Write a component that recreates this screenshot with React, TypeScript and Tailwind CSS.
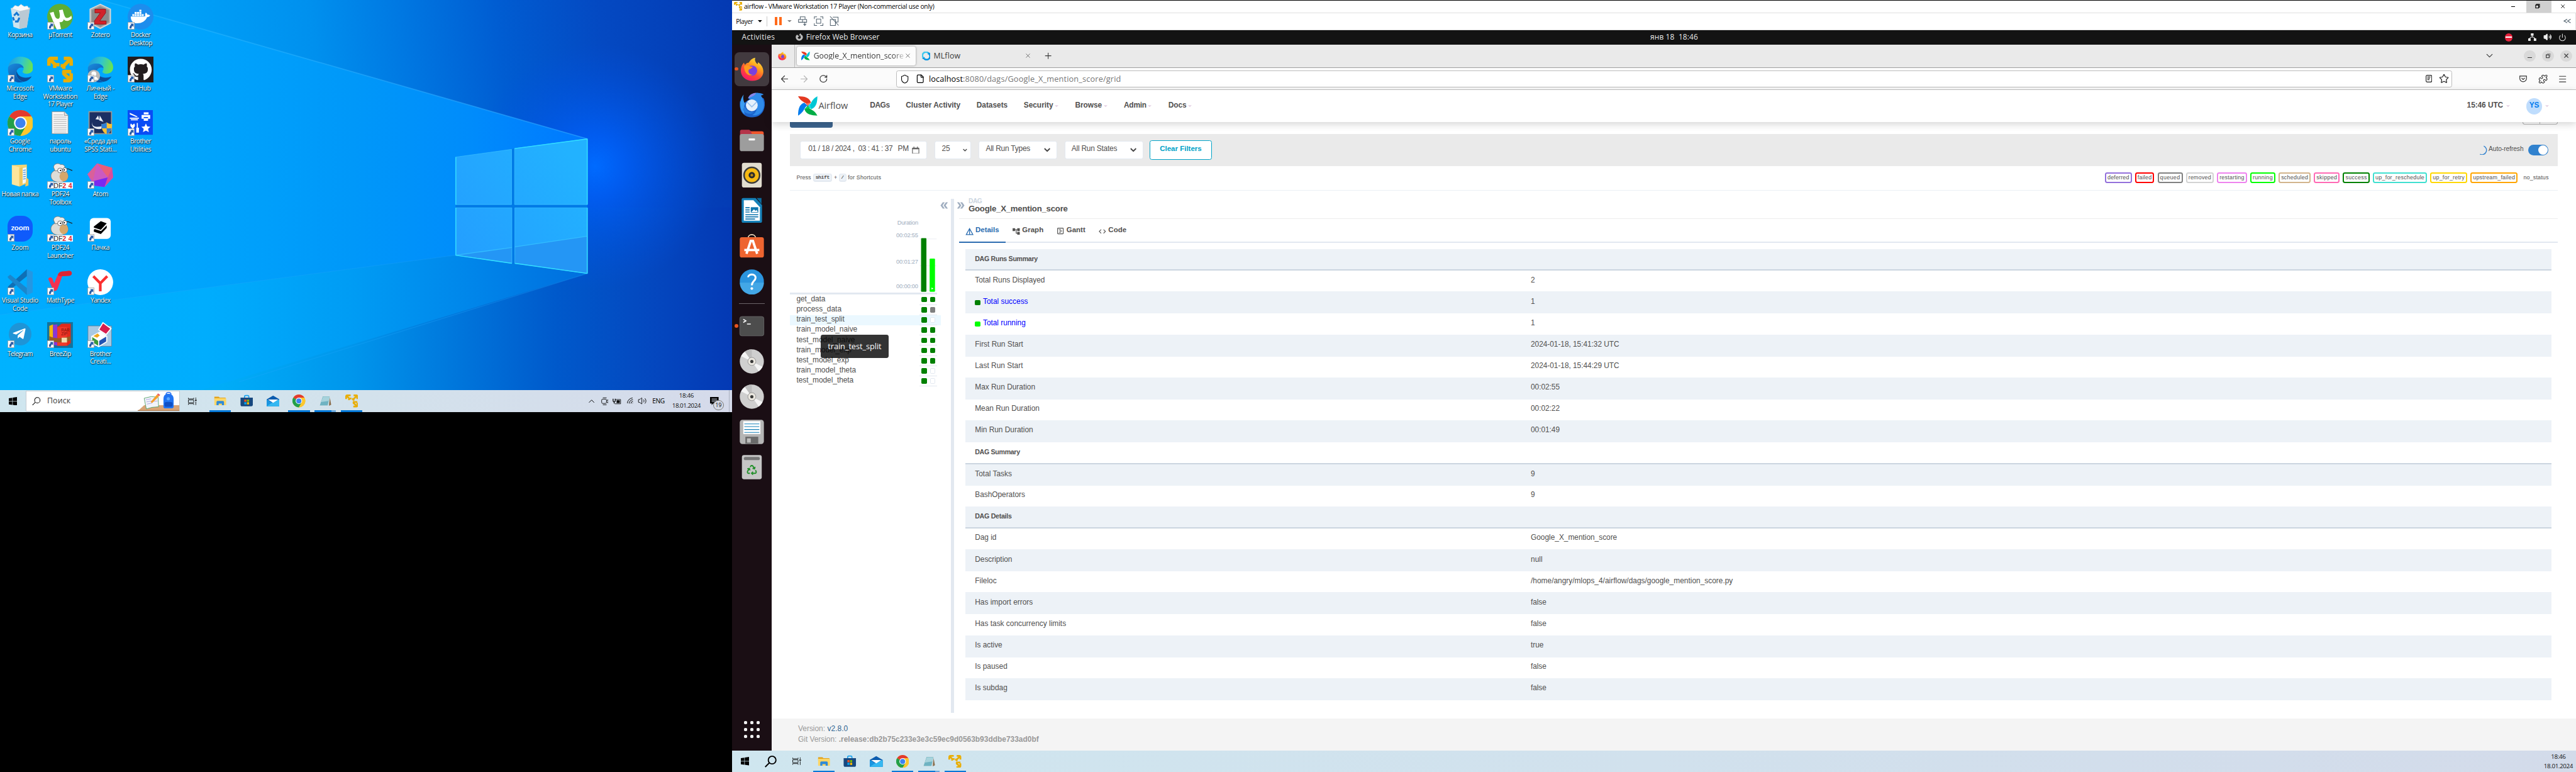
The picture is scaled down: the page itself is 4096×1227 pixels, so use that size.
import React, { useLayoutEffect, useRef, useState } from "react";
import {
  ArrowLeft, ArrowRight, RotateCw, Shield, File, Star, X, Plus, Menu, ChevronDown, ChevronUp, Power, Volume2, Wifi, Puzzle,
} from "lucide-react";
import { FaDocker, FaGithub, FaTelegramPlane, FaRecycle, FaFirefoxBrowser } from "react-icons/fa";
import { MdDetails, MdAccountTree, MdCode, MdDoubleArrow } from "react-icons/md";

/** Single-line text whose tracking is adjusted so that it fills a given width. */
function Fit({ w, className = "", children }: { w: number; className?: string; children: string }) {
  const outer = useRef<HTMLSpanElement>(null);
  const inner = useRef<HTMLSpanElement>(null);
  const [tracking, setTracking] = useState(0);
  useLayoutEffect(() => {
    if (!outer.current || !inner.current) return;
    const ratio = inner.current.getBoundingClientRect().width / outer.current.getBoundingClientRect().width;
    setTracking((w - w * ratio) / children.length);
  }, [w, children]);
  return (
    <span ref={outer} className={`inline-block shrink-0 whitespace-pre ${className}`} style={{ width: w }}>
      <span ref={inner} className="inline-block" style={{ letterSpacing: tracking }}>{children}</span>
    </span>
  );
}

type IconProps = { className?: string };

/* ---------- application icons ---------- */

const VmwareIcon = ({ className = "size-12" }: IconProps) => (
  <svg viewBox="0 0 48 48" className={className} fill="none" stroke="#e9ae07" strokeWidth="6.5" strokeLinejoin="round">
    <path d="M3.2 17V7a4 4 0 0 1 4-3.8H20M5 5l10 10h8M14 13v8" />
    <path d="M31 3.2h10a4 4 0 0 1 3.8 4V17M43 5L31 17h-6M31 15v8" />
    <path d="M44.8 31v10a4 4 0 0 1-4 3.8H30M43 43L31 32v-4h14" />
  </svg>
);

const ChromeIcon = ({ className = "size-12" }: IconProps) => (
  <svg viewBox="0 0 48 48" className={className}>
    <circle cx="24" cy="24" r="24" fill="#fcc72e" />
    <path d="M24 24L3.2 12A24 24 0 0 1 44.8 12H24z" fill="#e33b2e" />
    <path d="M3.2 12A24 24 0 0 0 24 48L34.4 30 24 24z" fill="#23a04a" />
    <path d="M44.8 12H24v12l10.4 6L24 48A24 24 0 0 0 44.8 12z" fill="#fcc72e" />
    <circle cx="24" cy="24" r="12" fill="#fff" />
    <circle cx="24" cy="24" r="9.5" fill="#3c83f1" />
  </svg>
);

const EdgeIcon = ({ person = false }: { person?: boolean }) => (
  <svg viewBox="0 0 48 48" className="size-12">
    <defs>
      <linearGradient id="edgeTop" x1="0" y1="0.3" x2="1" y2="0.5">
        <stop offset="0" stopColor="#1e9be0" />
        <stop offset="0.5" stopColor="#2fc5cf" />
        <stop offset="1" stopColor="#6be44e" />
      </linearGradient>
      <linearGradient id="edgeLow" x1="0" y1="0" x2="0.6" y2="1">
        <stop offset="0" stopColor="#1b8de0" />
        <stop offset="1" stopColor="#0b55a8" />
      </linearGradient>
    </defs>
    <path d="M1 20C3 8 12 0 24 0c14 0 24 9 24 20 0 8-6 12-13 12-5 0-7-2-7-4 0-1.500 2-2 2-6 0-6-6-9-12-9C11 13 4 16 1 20z" fill="url(#edgeTop)" />
    <path d="M1 20c3-5 9-7 16-7 7 0 12 4 13 8-8-3-14 3-14 11 0 7 6 14 14 15-16 5-31-8-29-27z" fill="url(#edgeLow)" />
    <path d="M17 27c-3 8 3 18 13 20 7-1 12-5 15-10-12 5-25 2-28-10z" fill="#0f4d96" />
    {person && (
      <g>
        <circle cx="12" cy="36" r="11.500" fill="#b9b9b9" />
        <circle cx="12" cy="32" r="4.500" fill="#fff" />
        <path d="M4 43c1-8 15-8 16 0z" fill="#fff" />
      </g>
    )}
  </svg>
);

const BinIcon = () => (
  <svg viewBox="0 0 48 48" className="size-12">
    <path d="M6 8L42 7 36 44 22 47 11 43z" fill="#dfe8ee" opacity="0.92" />
    <path d="M22 12l20-5-6 37-14 3z" fill="#b9c9d4" />
    <path d="M8 9l6-6 6 2 5-4 6 4 6-1 4 6-18 4z" fill="#f7f9fa" stroke="#b8c3cb" strokeWidth="0.7" />
    <path d="M12 22l5-5 4 5M22 26l-3 7h-5M12 31l-2-6" fill="none" stroke="#1778d2" strokeWidth="3.6" />
  </svg>
);

const UtorrentIcon = () => (
  <svg viewBox="0 0 48 48" className="size-12">
    <circle cx="24" cy="24" r="24" fill="#5fae34" />
    <path d="M5 17l7-2c2 7 3 12 7 13 5 1 6-5 3-16l7-1c2 7 3 13 6 15 3 1 7 0 10-4l1 5c-4 5-11 7-15 2-1 4-4 6-8 5 1 5 2 9 3 13l-8 1C13 38 9 27 5 17z" fill="#fff" />
  </svg>
);

const ZoteroIcon = () => (
  <svg viewBox="0 0 48 48" className="size-12">
    <path d="M24 1l19 9v26L24 46 5 36V10z" fill="#a9a9a9" stroke="#d8d8d8" strokeWidth="2" />
    <path d="M24 5l16 7v22l-16 9L8 34V12z" fill="#8b8b8b" />
    <path d="M14 10h20v7L23 32h12v6H13v-6l11-15H14z" fill="#d2232a" stroke="#8d1418" strokeWidth="1" />
  </svg>
);

const DockerTile = () => (
  <div className="flex size-12 items-center justify-center rounded-full bg-[#1d8ded]">
    <FaDocker className="size-[36px] text-white" />
  </div>
);

const GithubTile = () => (
  <div className="flex size-12 items-center justify-center bg-[#221d1f]">
    <FaGithub className="size-[42px] text-white" />
  </div>
);

const TextFileIcon = () => (
  <svg viewBox="0 0 48 48" className="size-12">
    <path d="M9 3h23l7 7v34H9z" fill="#f6f6f6" stroke="#8c8c8c" />
    <path d="M32 3v7h7" fill="#ddd" stroke="#8c8c8c" />
    <path d="M12 9h18M12 13h24M12 17h24M12 21h24M12 25h24M12 29h24M12 33h24M12 37h24M12 41h24" stroke="#a5a5a5" />
  </svg>
);

const SpssIcon = () => (
  <svg viewBox="0 0 48 48" className="size-12">
    <rect x="3" y="3" width="42" height="41" fill="#1b2f63" stroke="#9a9a9a" strokeWidth="2" />
    <path d="M9 21c-2 9 6 12 18 9l-1 5C15 37 6 31 9 21zM15 17l5-7 2 8zM22 19l1-9 7 12z" fill="#e9eef7" />
    <path d="M26 26c4 0 8-1 10-3 2 2 6 3 10 3 0 9-3 16-10 19-7-3-10-10-10-19z" fill="#f7c034" />
    <path d="M36 23c-2 2-6 3-10 3 0 3 .4 6 1.300 8H36zM36 34h8.700c-1.500 5-4.200 9-8.700 11z" fill="#2d7fd6" />
  </svg>
);

const BrotherUtilIcon = () => (
  <svg viewBox="0 0 48 48" className="size-12">
    <rect y="0" width="47" height="46" fill="#0a4cf5" />
    <g fill="#fff">
      <path d="M4 5l15 7-3 1L4 8zM4 14h17v2H4zM6 17h13v2H6z" />
      <path d="M30 4h9v4h-9zM26 9h16v7h-4v-3h-8v3h-4zM30 15h8v5h-8z" />
      <path d="M6 25l3 3 3-3c3 3 1 7-1 8v8H8v-8c-3-2-4-5-2-8zM17 24h2v9h2v9h-5v-9h1z" />
      <path d="M34 25l2.500 5.500 6 .5-4.500 4 1.500 6-5.500-3-5.500 3 1.500-6-4.500-4 6-.5z" />
    </g>
  </svg>
);

const FolderDocIcon = () => (
  <svg viewBox="0 0 48 48" className="size-12">
    <path d="M8 4l28-1v35l-14 6z" fill="#f5d574" />
    <path d="M8 4l14 4v36L8 40z" fill="#fde59b" />
    <path d="M28 10l7-2v28l-7 3z" fill="#f3f6f9" />
    <path d="M29 14l5-1M29 18l5-1M29 22l5-1M29 26l5-1M29 30l5-1" stroke="#4a90d9" strokeWidth="1.400" />
    <path d="M22 10l6-2v33l-6 3zM35 28l4 2v12l-6 2z" fill="#f0c75e" />
  </svg>
);

const Pdf24Icon = () => (
  <svg viewBox="0 0 48 48" className="size-12">
    <path d="M7 24c0-6 6-11 14-12 9-2 17 3 18 12 0 8-7 12-16 12-10 0-16-5-16-12z" fill="#dcdcd8" stroke="#777" />
    <path d="M12 8c0-6 8-9 13-5 5-1 8 2 8 5l-6 5-12 2z" fill="#ececea" stroke="#777" />
    <ellipse cx="31" cy="25" rx="8" ry="9" fill="#d5a76a" />
    <circle cx="24" cy="14" r="4.500" fill="#fff" stroke="#555" />
    <circle cx="33" cy="13" r="4" fill="#fff" stroke="#555" />
    <circle cx="25" cy="14" r="1.300" /><circle cx="32" cy="13" r="1.300" />
    <path d="M37 11c4-1 7 3 10 3" stroke="#222" strokeWidth="1.500" fill="none" />
    <rect y="36" width="48" height="12" fill="#fff" />
    <text x="12" y="46.500" fontFamily="Liberation Sans" fontSize="12.500" fill="#222">DF</text>
    <text x="28.500" y="46.500" fontFamily="Liberation Sans" fontWeight="bold" fontSize="12.500" textLength="18" fill="#e3242b">24</text>
  </svg>
);

const AtomGemIcon = () => (
  <svg viewBox="0 0 48 48" className="size-12">
    <path d="M18 1L46 9 48 27 32 45 11 42 0 21z" fill="#b455d8" />
    <path d="M18 1L46 9 38 27 10 34 0 21z" fill="#d9609a" />
    <path d="M18 1l28 8-8 18z" fill="#ea5f78" />
    <path d="M18 1l20 26-28 7z" fill="#cc5ac0" />
    <path d="M10 34l28-7-6 18-21-3z" fill="#7a28f0" />
    <path d="M38 27l8-18 2 18-16 18z" fill="#d84c9c" />
  </svg>
);

const ZoomTile = () => (
  <div className="flex size-12 items-center justify-center rounded-[19px] bg-[#0f5bfb] pb-1">
    <Fit w={34} className="font-['Lato'] text-[14px] leading-none font-bold text-white">zoom</Fit>
  </div>
);

const PachkaIcon = () => (
  <svg viewBox="0 0 48 48" className="size-12">
    <rect x="4.500" y="4" width="39" height="39" rx="7" fill="#fff" />
    <path d="M12 20l13-10 11 4-11 12-13-4zM12 26l1.500-1.500 12 4L36 18v4.500L25 34l-13-4.500z" fill="#000" />
  </svg>
);

const VscodeIcon = () => (
  <svg viewBox="0 0 48 48" className="size-12">
    <path d="M36 0l12 5v38l-12 5z" fill="#2497e3" />
    <path d="M36 0L2 31l-2 3 5 4L36 13z" fill="#0f6fb5" />
    <path d="M36 48L2 17l-2-3 5-4 31 25z" fill="#1b86cc" />
  </svg>
);

const MathTypeIcon = () => (
  <svg viewBox="0 0 48 48" className="size-12">
    <path d="M2 18c2-4 6-4 8 0l3 8 7-16c2-5 6-6 10-6l11-1c6 0 7 8 1 9l-14 1-8 22c-2 7-8 7-10 1z" fill="#f4324f" />
    <path d="M20 10c2-5 6-6 10-6l11-1c6 0 7 8 1 9l-14 1c-4 0-7 0-8-3z" fill="#dd2433" />
  </svg>
);

const YandexIcon = () => (
  <svg viewBox="0 0 48 48" className="size-12">
    <circle cx="24" cy="24" r="24" fill="#fff" />
    <path d="M11 13l13 13 13-13M24 26v15" fill="none" stroke="#fb2f2f" strokeWidth="5" />
  </svg>
);

const TelegramTile = () => (
  <div className="flex size-12 items-center justify-center pb-1">
    <div className="flex size-[43px] items-center justify-center rounded-full bg-[#1f94d6] pr-1">
      <FaTelegramPlane className="size-[27px] text-white" />
    </div>
  </div>
);

const BreeZipIcon = () => (
  <svg viewBox="0 0 48 48" className="size-12">
    <rect width="48" height="48" fill="#14729c" />
    <path d="M4 7l7-3v38l-7-3z" fill="#f5b50f" /><path d="M11 5l8-1v40l-8-2z" fill="#8b35d6" />
    <path d="M19 9l8-6h17v36l-6 5H19z" fill="#e02a1c" /><path d="M19 9h18v35H19z" fill="#f0392a" />
    <path d="M4 26c12 6 26 4 40 0v8c-14 5-28 5-40 0z" fill="#9a5a22" />
    <path d="M27 29h10v9H27z" fill="#f0dcae" />
    <text x="26" y="18" fontFamily="Liberation Sans" fontSize="7.500" fill="#7a0f08">RAR</text>
    <text x="26" y="25" fontFamily="Liberation Sans" fontSize="7.500" fill="#7a0f08">ZIP</text>
  </svg>
);

const BrotherCreativeIcon = () => (
  <svg viewBox="0 0 48 48" className="size-12">
    <path d="M1 7h44v38H1z" fill="#a9c9e3" stroke="#5e7d99" />
    <path d="M7 26l17-9 13 9v11l-16 10-14-9z" fill="#fff" />
    <path d="M9 28l11 7v9L9 37z" fill="#3a9a3d" /><path d="M22 35l13-8v9l-13 8z" fill="#2153b3" />
    <path d="M11 26l8-5 4 4-5 4z" fill="#f2a81d" />
    <path d="M29 1l15 11-9 11-14-9z" fill="#d81e4f" stroke="#fff" strokeWidth="2" />
  </svg>
);

const FolderIcon = () => (
  <svg viewBox="0 0 24 24" className="size-6">
    <path d="M1 4h8l2 2h11v4H1z" fill="#e3a21a" /><path d="M1 7h22v13H1z" fill="#fbd667" />
    <path d="M5 20v-6a2 2 0 0 1 2-2h10a2 2 0 0 1 2 2v6h-4v-3H9v3z" fill="#2f8ad8" />
  </svg>
);
const StoreIcon = () => (
  <svg viewBox="0 0 24 24" className="size-6">
    <path d="M8 7V4a2 2 0 0 1 2-2h4a2 2 0 0 1 2 2v3" fill="none" stroke="#1ca4ee" strokeWidth="2" />
    <path d="M.5 6h23v13a3 3 0 0 1-3 3h-17a3 3 0 0 1-3-3z" fill="#17487f" />
    <path d="M7.500 9.500h4v4h-4z" fill="#f25022" /><path d="M12.500 9.500h4v4h-4z" fill="#7fba00" />
    <path d="M7.500 14.500h4v4h-4z" fill="#00a4ef" /><path d="M12.500 14.500h4v4h-4z" fill="#ffb900" />
  </svg>
);
const MailIcon = () => (
  <svg viewBox="0 0 24 24" className="size-6">
    <path d="M0 9l12-7 12 7v13H0z" fill="#0b5cae" /><path d="M0 9l12 7 12-7v13H0z" fill="#1b95e0" />
    <path d="M0 22l12-8 12-5v13z" fill="#35b8f1" />
    <path d="M2.500 9.500h19L12 15.500z" fill="#fff" />
  </svg>
);
const NotepadIcon = () => (
  <svg viewBox="0 0 24 24" className="size-6">
    <path d="M20 3l3 16-4 2z" fill="#8a6d4b" />
    <path d="M7 3h14l-4 18H1z" fill="#6fb3c2" stroke="#dfe9ec" /><path d="M8 4h12l-2 8-14 2z" fill="#a7d3dc" />
  </svg>
);

const WinLogo = () => (
  <svg viewBox="0 0 16 16" className="size-4"><path d="M0 2.300L6.500 1.400v6.200H0zM7.300 1.300L16 0v7.600H7.300zM0 8.400h6.500v6.200L0 13.700zM7.300 8.400H16V16l-8.700-1.300z" fill="#000" /></svg>
);
const Magnifier = ({ className = "size-4", sw = 1.2 }: IconProps & { sw?: number }) => (
  <svg viewBox="0 0 16 16" className={className} fill="none" stroke="#000" strokeWidth={sw}><circle cx="10" cy="6" r="5.200" /><path d="M6.200 9.800L.6 15.400" /></svg>
);
const TaskViewIcon = () => (
  <svg viewBox="0 0 17 16" className="h-4 w-[17px]" fill="none" stroke="#000"><path d="M.6 1.500v2h10v-2M.6 14.500v-2h10v2M.6 5.500h10v5H.6zM14.500 1v3M14.500 8v7" /><path d="M13 5h3v2h-3z" fill="#000" stroke="none" /></svg>
);

const FirefoxIcon = ({ className = "size-4" }: IconProps) => (
  <svg viewBox="0 0 42 44" className={className}>
    <defs>
      <linearGradient id="ffBody" x1="0.85" y1="0" x2="0.25" y2="1">
        <stop offset="0" stopColor="#fff04d" /><stop offset="0.35" stopColor="#ffa51e" />
        <stop offset="0.65" stopColor="#ff4b35" /><stop offset="1" stopColor="#f5146e" />
      </linearGradient>
    </defs>
    <path d="M27 1c-2 5 1 9 4 12 1-2 1-3 1-4 7 5 10 11 10 18 0 10-9 17-21 17S0 36 0 25c0-7 3-12 6-15 0 2 1 3 2 4 2-3 5-4 7-4 2-4 6-8 12-9z" fill="url(#ffBody)" />
    <circle cx="21" cy="25" r="9.500" fill="#7a3fe0" />
    <path d="M6 17c4-3 9-2 11 0l5 1c-2 4-6 4-7 5-3 6 3 11 9 9-9 5-18-2-18-15z" fill="#ff9a1f" />
  </svg>
);

const AirflowLogo = ({ className = "size-9" }: IconProps) => {
  const blade = "M0 0C11 0 21 2 24 11.500L18.300 18C17 11 7 13 0 0z";
  return (
    <svg viewBox="0 0 36 36" className={className}>
      <path d={blade} fill="#e43921" />
      <path d={blade} fill="#00c7d4" transform="rotate(90 18 18)" />
      <path d={blade} fill="#00ad46" transform="rotate(180 18 18)" />
      <path d={blade} fill="#017cee" transform="rotate(270 18 18)" />
      <path d="M24 11.500L18.300 18 14 14z" fill="#ff7557" />
      <path d="M24.500 24L18.300 18 22 14z" fill="#11e1ee" />
      <path d="M12 24.500L18.300 18l4 4z" fill="#04d659" />
      <circle cx="18.200" cy="18" r="1" fill="#51504f" />
    </svg>
  );
};

/* ---------- left monitor ---------- */

type Shortcut = { icon: React.ReactNode; lines: [string, number][]; link?: boolean };

const desktopColumns: Shortcut[][] = [
  [
    { icon: <BinIcon />, lines: [["Корзина", 46]], link: false },
    { icon: <EdgeIcon />, lines: [["Microsoft", 51], ["Edge", 26]] },
    { icon: <ChromeIcon />, lines: [["Google", 38], ["Chrome", 43]] },
    { icon: <FolderDocIcon />, lines: [["Новая папка", 69]], link: false },
    { icon: <ZoomTile />, lines: [["Zoom", 32]] },
    { icon: <VscodeIcon />, lines: [["Visual Studio", 68], ["Code", 28]] },
    { icon: <TelegramTile />, lines: [["Telegram", 47]] },
  ],
  [
    { icon: <UtorrentIcon />, lines: [["µTorrent", 44]] },
    { icon: <VmwareIcon />, lines: [["VMware", 43], ["Workstation", 64], ["17 Player", 47]] },
    { icon: <TextFileIcon />, lines: [["пароль", 40], ["ubuntu", 39]], link: false },
    { icon: <Pdf24Icon />, lines: [["PDF24", 33], ["Toolbox", 41]] },
    { icon: <Pdf24Icon />, lines: [["PDF24", 33], ["Launcher", 49]] },
    { icon: <MathTypeIcon />, lines: [["MathType", 52]] },
    { icon: <BreeZipIcon />, lines: [["BreeZip", 40]] },
  ],
  [
    { icon: <ZoteroIcon />, lines: [["Zotero", 35]] },
    { icon: <EdgeIcon person />, lines: [["Личный -", 52], ["Edge", 26]] },
    { icon: <SpssIcon />, lines: [["«Среда для", 61], ["SPSS Stati...", 60]] },
    { icon: <AtomGemIcon />, lines: [["Atom", 29]] },
    { icon: <PachkaIcon />, lines: [["Пачка", 34]] },
    { icon: <YandexIcon />, lines: [["Yandex", 37]] },
    { icon: <BrotherCreativeIcon />, lines: [["Brother", 40], ["Creati...", 39]] },
  ],
  [
    { icon: <DockerTile />, lines: [["Docker", 37], ["Desktop", 43]] },
    { icon: <GithubTile />, lines: [["GitHub", 38]] },
    { icon: <BrotherUtilIcon />, lines: [["Brother", 39], ["Utilities", 39]] },
  ],
];

function DesktopShortcut({ icon, lines, link = true }: Shortcut) {
  return (
    <div className="flex h-[99px] w-[75px] flex-col items-center pt-[7px]">
      <div className="relative size-12">
        {icon}
        {link && (
          <svg viewBox="0 0 13 14" className="absolute bottom-0 left-0 h-[14px] w-[13px]">
            <path d="M.5.5h12v13H.5z" fill="#fff" stroke="#9a9a9a" />
            <path d="M5 3h6v6L9 7.200C7.500 8.500 7 10 7.200 12H3.500C3 9 4 6.500 6.700 4.800z" fill="#2c5fa8" />
          </svg>
        )}
      </div>
      <div className="mt-[3px] flex flex-col items-center font-['Open_Sans','Noto_Sans',sans-serif] text-[12px] leading-[15px] text-white [text-shadow:0_1px_2px_#000a,1px_1px_1px_#000a]">
        {lines.map(([t, w]) => <Fit key={t} w={w}>{t}</Fit>)}
      </div>
    </div>
  );
}

function Wallpaper() {
  return (
    <svg viewBox="0 0 1366 768" className="absolute inset-0 h-[768px] w-[1366px]" preserveAspectRatio="none">
      <defs>
        <linearGradient id="sky" x1="0" y1="140" x2="1366" y2="0" gradientUnits="userSpaceOnUse">
          <stop offset="0" stopColor="#00a8fb" /><stop offset="0.25" stopColor="#00a1f8" />
          <stop offset="0.43" stopColor="#0090ee" /><stop offset="0.55" stopColor="#0078e2" />
          <stop offset="0.68" stopColor="#005dd2" /><stop offset="0.82" stopColor="#0449c2" /><stop offset="1" stopColor="#0439b2" />
        </linearGradient>
        <linearGradient id="cone" x1="0" x2="1096" y1="0" y2="0" gradientUnits="userSpaceOnUse">
          <stop offset="0" stopColor="#00acff" /><stop offset="0.3" stopColor="#00a6fd" />
          <stop offset="0.6" stopColor="#0098f9" /><stop offset="0.8" stopColor="#008cfb" /><stop offset="1" stopColor="#0078ff" />
        </linearGradient>
        <linearGradient id="floor" x1="0" x2="1096" y1="0" y2="0" gradientUnits="userSpaceOnUse">
          <stop offset="0" stopColor="#00b2ff" /><stop offset="0.35" stopColor="#00adfd" />
          <stop offset="0.6" stopColor="#009cf4" /><stop offset="0.8" stopColor="#0086ea" /><stop offset="1" stopColor="#006ede" />
        </linearGradient>
        <linearGradient id="below" x1="0" x2="1366" y1="0" y2="0" gradientUnits="userSpaceOnUse">
          <stop offset="0" stopColor="#00b2fe" /><stop offset="0.3" stopColor="#00adf8" />
          <stop offset="0.48" stopColor="#0096ec" /><stop offset="0.62" stopColor="#0077dc" />
          <stop offset="0.76" stopColor="#0059cb" /><stop offset="0.9" stopColor="#0446be" /><stop offset="1" stopColor="#0439b4" />
        </linearGradient>
        <radialGradient id="glow" cx="1110" cy="310" r="230" gradientUnits="userSpaceOnUse">
          <stop offset="0" stopColor="#006bff" /><stop offset="0.25" stopColor="#0060fa" stopOpacity="0.8" /><stop offset="1" stopColor="#0050e0" stopOpacity="0" />
        </radialGradient>
        <linearGradient id="pane" x1="0" y1="1" x2="1" y2="0.3">
          <stop offset="0" stopColor="#249dff" /><stop offset="1" stopColor="#22b2ff" />
        </linearGradient>
        <linearGradient id="ray" x1="188" x2="1096" y1="0" y2="0" gradientUnits="userSpaceOnUse">
          <stop offset="0" stopColor="#35c0ff" stopOpacity="0.35" /><stop offset="1" stopColor="#2aa2ff" stopOpacity="0.7" />
        </linearGradient>
      </defs>
      <rect width="1366" height="768" fill="url(#sky)" />
      <path d="M0 587L850 476 1096 387H1366V768H0z" fill="url(#below)" />
      <rect x="850" width="516" height="768" fill="url(#glow)" />
      <path d="M0 0H188L1096 259V476H850L0 587z" fill="url(#cone)" />
      <path d="M0 587L850 476 1096 510 240 768H0z" fill="url(#floor)" />
      <path d="M188 0L1096 259" stroke="url(#ray)" strokeWidth="2" />
      <path d="M0 587L850 476M1096 510L446 712" stroke="#22a8ff" strokeOpacity="0.3" strokeWidth="1.500" />
      <path d="M850 381.500h246v6H850zM954.500 278l5.500-1v214h-5.500z" fill="#0079e6" />
      <g fill="url(#pane)">
        <path d="M850 293l104.500-14.500v103H850zM960 277l136-18v122.500H960zM850 387.500h105V491l-105-15zM960.500 387.500H1096V510l-135.500-19z" />
      </g>
      <path d="M850 476l105-14.500V491zM960.500 460.500L1096 440.500V510l-135.500-19z" fill="#2496f5" />
      <path d="M850 476l105-14.500M960.500 460.500L1096 440.500" stroke="#33bcff" strokeWidth="1.500" />
      <g fill="none" stroke="#40c4ff" strokeOpacity="0.75">
        <path d="M850 293l104.500-14.500v103H850zM960 277l136-18v122.500H960zM850 387.500h105V491l-105-15zM960.500 387.500H1096V510l-135.500-19z" />
      </g>
      <path d="M850.500 293v88.500M850.500 387.500V476M1095.500 259v122.500M1095.500 387.500V510M960 277l136-18M960.500 491L1096 510M850 476l105 15" stroke="#33e0ff" strokeWidth="1.600" fill="none" />
    </svg>
  );
}

function TaskApps() {
  const apps: { icon: React.ReactNode; state: "open" | "stack" | "idle" }[] = [
    { icon: <FolderIcon />, state: "open" },
    { icon: <StoreIcon />, state: "idle" },
    { icon: <MailIcon />, state: "idle" },
    { icon: <ChromeIcon className="size-6" />, state: "open" },
    { icon: <NotepadIcon />, state: "stack" },
    { icon: <VmwareIcon className="size-6" />, state: "open" },
  ];
  return (
    <div className="flex h-10">
      {apps.map(({ icon, state }, i) => (
        <div key={i} className="mr-px flex h-10 w-12 flex-col items-center justify-between pt-[8px]">
          {icon}
          <div className="flex h-[2.4px] w-10">
            {state !== "idle" && <div className="h-full flex-1 bg-[#0078d7]" />}
            {state === "stack" && <div className="h-full w-2 bg-[#6aa9de]" />}
          </div>
        </div>
      ))}
    </div>
  );
}

const winFont = "font-['Open_Sans','Noto_Sans',sans-serif]";

function LeftTaskbar() {
  return (
    <div className="relative flex h-10 items-center bg-linear-to-r from-[#cfe6ef] via-[#d3e2ec] to-[#d5daea]">
      <div className="flex w-12 justify-center"><WinLogo /></div>
      <div className="flex h-[39px] w-[288px] items-center overflow-hidden border border-[#c4ccd2] bg-white pl-[11px]">
        <Magnifier />
        <Fit w={44} className={`ml-3 text-[14.5px] leading-none text-[#3c3c3c] ${winFont}`}>Поиск</Fit>
        <svg viewBox="0 0 78 38" className="ml-[125px] h-[38px] w-[78px] shrink-0">
          <path d="M12 27h66v11H0z" fill="#d9a577" /><path d="M0 36h78v2H0z" fill="#b88457" />
          <path d="M12 14l13-3 13 1 1 18-12 1-11 3z" fill="#f2f4fa" stroke="#4b9b63" />
          <path d="M15 17l10-2M16 21l10-2M17 25l10-2M29 16l7-1M29 20l8-1" stroke="#a49be0" />
          <path d="M24 21L36 7l4 3-13 13z" fill="#f7a02c" /><path d="M36 7l2-2 4 3-2 2z" fill="#ee5b62" />
          <path d="M53 7c0-5 9-5 9 0" fill="none" stroke="#2b73f0" strokeWidth="2" />
          <path d="M48 16c0-8 4-10 9-10s10 2 10 10v14c0 2-2 3-4 3H52c-3 0-4-1-4-3z" fill="#2074f2" />
          <rect x="50" y="21" width="15" height="9" rx="3" fill="#0f4fc4" /><circle cx="57" cy="15" r="3" fill="#58a8ff" />
        </svg>
      </div>
      <div className="ml-[15px]"><TaskViewIcon /></div>
      <div className="ml-[19px]"><TaskApps /></div>
      <div className="flex-1" />
      <ChevronUp className="size-[18px] text-black" strokeWidth={1.5} />
      <svg viewBox="0 0 14 16" className="ml-[9px] h-4 w-[14px]" fill="none" stroke="#000"><path d="M3 1.500h7M3 14.500h7" /><rect x=".8" y="4" width="9" height="8" rx="2" /><path d="M10 7l3-2v6l-3-2" /></svg>
      <svg viewBox="0 0 17 14" className="ml-[8px] h-[14px] w-[17px]"><path d="M1 2v4a2 2 0 0 0 4 0V2M3 8v3" stroke="#000" strokeWidth="1.500" fill="none" /><path d="M6 3.500h9v8H4" fill="none" stroke="#000" /><path d="M7.500 5h6v5h-6z" /></svg>
      <Wifi className="ml-[9px] size-[16px] -rotate-45 text-black" strokeWidth={1.6} />
      <Volume2 className="ml-[5px] size-[17px] text-black" strokeWidth={1.5} />
      <Fit w={23} className={`ml-[10px] text-[12px] leading-none text-black ${winFont}`}>ENG</Fit>
      <div className={`ml-[14px] flex flex-col items-center text-[11.5px] leading-[19px] text-[#111] ${winFont}`}>
        <Fit w={27}>18:46</Fit>
        <Fit w={53}>18.01.2024</Fit>
      </div>
      <div className="relative ml-[18px] h-10 w-[26px]">
        <svg viewBox="0 0 16 16" className="mt-[12px] size-4"><path d="M0 0h16v12H6l-3 3v-3H0z" fill="#000" /><path d="M3 3.500h10M3 6h10M3 8.500h7" stroke="#d5daea" /></svg>
        <div className="absolute top-[18px] left-[6px] flex size-[19px] items-center justify-center rounded-full border border-[#777] bg-[#d6dbe6]">
          <span className={`text-[10px] leading-none text-black ${winFont}`}>19</span>
        </div>
      </div>
      <div className="ml-[9px] h-10 w-[6px] border-l border-[#a9b0bf]" />
    </div>
  );
}

function LeftMonitor() {
  return (
    <div className="flex h-[1440px] w-[1366px] shrink-0 flex-col bg-black">
      <div className="relative h-[768px] overflow-hidden">
        <Wallpaper />
        <div className="relative flex h-[728px]">
          {desktopColumns.map((col, i) => (
            <div key={i} className="flex flex-col">
              {col.map((s, j) => <DesktopShortcut key={j} {...s} />)}
            </div>
          ))}
        </div>
        <LeftTaskbar />
      </div>
    </div>
  );
}

/* ---------- VMware chrome and GNOME shell ---------- */

function VmwareChrome() {
  return (
    <div className={`flex flex-col bg-white text-[12px] leading-none text-black ${winFont}`}>
      <div className="h-px bg-black" />
      <div className="flex h-[22px] items-center pl-[3px]">
        <VmwareIcon className="size-4" />
        <Fit w={355} className="ml-[3px]">airflow - VMware Workstation 17 Player (Non-commercial use only)</Fit>
        <div className="flex-1" />
        <div className="h-px w-[7px] bg-black" />
        <div className="ml-[21px] flex h-[22px] w-[47px] items-center justify-center bg-[#d0d0d0]">
          <svg viewBox="0 0 9 9" className="mr-[4px] size-[9px]"><path d="M1 2.500h5.500V8H1zM2.500 2V.8h5.700v5.700H7" fill="none" stroke="#000" strokeWidth="1.300" /></svg>
        </div>
        <X className="mr-[18px] ml-[16px] size-[12px]" strokeWidth={2} />
      </div>
      <div className="h-px bg-[#dfdfdf]" />
      <div className="flex h-[31px] items-center border-r border-[#dfdfdf] pl-[7px]">
        <Fit w={32}>Player</Fit>
        <svg viewBox="0 0 8 4" className="mt-px ml-[9px] h-1 w-2"><path d="M0 0h8L4 4z" /></svg>
        <div className="ml-[8px] h-[19px] w-px bg-[#c9c9c9]" />
        <div className="ml-[15px] flex gap-[4px]">
          <div className="h-4 w-[4px] bg-[#ff6a1a]" />
          <div className="h-4 w-[4px] bg-[#ff6a1a]" />
        </div>
        <svg viewBox="0 0 8 4" className="ml-[11px] h-1 w-2"><path d="M0 0h8L4 4z" fill="#888" /></svg>
        <svg viewBox="0 0 18 18" className="ml-[12px] size-[18px]" fill="none" stroke="#51616e" strokeWidth="1.200"><path d="M4 1h9v5H4zM.8 6h7.500v5H.8zM8.300 6H16v5H8.300zM12.500 10v6M10 14l2.500 3 2.500-3" /></svg>
        <svg viewBox="0 0 18 18" className="ml-[11px] size-[18px]" fill="none" stroke="#51616e" strokeWidth="1.200"><path d="M1 5V1h5M12 1h5v4M17 13v4h-5M6 17H1v-4M5 5h8v8H5z" /></svg>
        <svg viewBox="0 0 18 18" className="ml-[12px] size-[18px]" fill="none" stroke="#51616e" strokeWidth="1.200"><path d="M6 1.500h10v9h-5M1.500 6H11v11H1.500zM1 0l16 17" /></svg>
        <div className="flex-1" />
        <svg viewBox="0 0 14 8" className="mr-[8px] h-2 w-[14px]" fill="none" stroke="#51616e" strokeWidth="1.300"><path d="M7 .6L1.200 4 7 7.400M13.500.6L7.700 4l5.800 3.400" /></svg>
      </div>
      <div className="ml-[60px] h-px bg-[#dfdfdf]" />
    </div>
  );
}

const ubuntu = "font-['Open_Sans','Noto_Sans',sans-serif]";

function GnomeBar() {
  return (
    <div className={`flex h-[27px] items-center bg-[#131313] text-[14px] leading-none text-[#e8e8e8] ${ubuntu}`}>
      <Fit w={62} className="ml-[18px]">Activities</Fit>
      <FaFirefoxBrowser className="ml-[38px] size-[14px] text-[#bdbdbd]" />
      <Fit w={137} className="ml-[6px]">Firefox Web Browser</Fit>
      <Fit w={89} className="ml-[1438px]">янв 18  18:46</Fit>
      <div className="flex-1" />
      <div className="flex size-[15px] items-center justify-center rounded-full bg-[#e6223c]"><div className="h-[2px] w-[11px] bg-white" /></div>
      <svg viewBox="0 0 15 14" className="ml-[29px] h-[14px] w-[15px]" fill="#f0f0f0"><path d="M5 0h5v4.500H5zM0 9.500h4.500V14H0zM10.500 9.500H15V14h-4.500z" /><path d="M7.500 4v3M2 10l3-3h5l3 3" fill="none" stroke="#f0f0f0" strokeWidth="1.200" /></svg>
      <Volume2 className="ml-[13px] size-[16px]" strokeWidth={2} fill="#f0f0f0" />
      <Power className="mr-[18px] ml-[12px] size-[15px]" strokeWidth={1.9} />
    </div>
  );
}

function Disc() {
  return (
    <svg viewBox="0 0 48 48" className="size-12">
      <circle cx="24" cy="24" r="22.500" fill="#cfcfcf" />
      <path d="M24 24L4 14A22.500 22.500 0 0 1 11 5.500zM24 24l20 10a22.500 22.500 0 0 1-7 8.500z" fill="#f4f4f4" />
      <path d="M24 24L11 5.500A22.500 22.500 0 0 1 24 1.500z" fill="#bdbdbd" />
      <circle cx="24" cy="24" r="7.500" fill="#e9e6df" stroke="#8d8d8d" /><circle cx="24" cy="24" r="3" fill="#3a3a3a" />
    </svg>
  );
}

const dockTop: React.ReactNode[] = [
  <div className="flex size-16 items-center justify-center rounded-[9px] bg-[#423a3f]"><FirefoxIcon className="h-[44px] w-[42px]" /></div>,
  <svg viewBox="0 0 48 48" className="size-12">
    <path d="M2 17C0 30 4 42 15 46c13 4 26 0 31-12 3-8 3-16 0-22L30 6 8 22z" fill="#1c62c9" />
    <path d="M17 12c3-8 12-11 19-10 4 0 8 1 10 3l-5 2c6 8 8 20 2 29-4 6-12 9-18 7 12-6 12-25-8-31z" fill="#2f8bea" />
    <path d="M17 12c3-8 10-10 15-10-3 6-9 7-15 10z" fill="#8a86e8" />
    <path d="M9 5C0 15 0 34 11 42c-2-5-3-12 0-20C8 16 7 10 9 5z" fill="#3a9cf2" />
    <circle cx="24" cy="25" r="11" fill="#e6f1fc" /><path d="M15 19l9 9 9-9" fill="none" stroke="#9cc3ec" strokeWidth="2" />
    <path d="M11 27c2 8 9 12 17 11-6 5-18 3-21-5z" fill="#2a7fe0" />
  </svg>,
  <svg viewBox="0 0 48 48" className="size-12">
    <path d="M2 8a3 3 0 0 1 3-3h14l4 3h20a3 3 0 0 1 3 3v12H2z" fill="#b5344a" /><path d="M22 8h21a3 3 0 0 1 3 3v6H26z" fill="#f0562c" />
    <rect x="1.500" y="13" width="45" height="32" rx="4" fill="#9d9d9d" /><rect x="18" y="21" width="12" height="4" rx="1.500" fill="#fff" />
  </svg>,
  <svg viewBox="0 0 48 48" className="size-12">
    <rect x="5.500" y="1" width="37" height="46" rx="4" fill="#e2ddd0" /><circle cx="24" cy="24" r="16" fill="#3b3b3b" />
    <circle cx="24" cy="24" r="13" fill="#f6b913" /><circle cx="24" cy="24" r="6" fill="#2b2b2b" /><circle cx="24" cy="24" r="2.500" fill="#b98a1a" />
  </svg>,
  <svg viewBox="0 0 48 48" className="size-12">
    <path d="M8 1h23l12 13v30a3 3 0 0 1-3 3H8a3 3 0 0 1-3-3V4a3 3 0 0 1 3-3z" fill="#1580b8" />
    <path d="M10 5h17l12 13v25H9V5z" fill="#fff" /><path d="M33 1h9v11z" fill="#0b6a9c" />
    <path d="M12 19h8M12 23h8M12 27h8M12 32h24M12 36h24M12 40h18" stroke="#1076ae" strokeWidth="2" />
    <rect x="22" y="18" width="14" height="10" fill="#1076ae" /><path d="M23 27l5-5 3 3 2-2 2 4z" fill="#fff" />
  </svg>,
  <svg viewBox="0 0 48 48" className="size-12">
    <path d="M17 9c0-9 14-9 14 0" fill="none" stroke="#f3dfc0" strokeWidth="2" />
    <rect x="1.500" y="7" width="45" height="38" rx="4" fill="#ee6430" />
    <path d="M14 38l8-24h4l8 24M10 31h28" fill="none" stroke="#fff" strokeWidth="4.500" />
  </svg>,
  <svg viewBox="0 0 48 48" className="size-12">
    <circle cx="24" cy="24" r="22.500" fill="#2b94de" /><path d="M1.500 26h45A22.500 22.500 0 0 1 1.500 26z" fill="#43a7e6" />
    <path d="M17 16c1-7 14-7 14 1 0 6-7 6-7 14" fill="none" stroke="#fff" strokeWidth="3.500" /><circle cx="24" cy="37" r="2.500" fill="#fff" />
  </svg>,
];

const dockBottom: React.ReactNode[] = [
  <svg viewBox="0 0 48 48" className="size-12">
    <rect x="1.500" y="6" width="45" height="36" rx="4" fill="#4d4d4d" stroke="#6a6a6a" />
    <path d="M8 11l5 3-5 3M15 20h7" stroke="#fff" strokeWidth="1.800" fill="none" />
  </svg>,
  <Disc />,
  <Disc />,
  <svg viewBox="0 0 48 48" className="size-12">
    <rect x="1.500" y="1.500" width="45" height="45" rx="5" fill="#b5b5b5" /><path d="M8 4h32v24H8z" fill="#fff" />
    <path d="M10 9h28M10 14h28M10 19.500h28M10 25h28" stroke="#1580b8" strokeWidth="1.200" /><path d="M12 33h24v13H12z" fill="#6a6a6a" /><path d="M15 36h7v8h-7z" fill="#bdbdbd" />
  </svg>,
  <svg viewBox="0 0 48 48" className="size-12">
    <rect x="5.500" y="1.500" width="37" height="45" rx="4" fill="#c6c6c6" /><rect x="9" y="5" width="30" height="6" rx="3" fill="#777" />
    <g transform="translate(14.500 20)"><FaRecycle size={19} color="#23902b" /></g>
  </svg>,
];

function Dock() {
  const cell = (icon: React.ReactNode, i: number, active: boolean) => (
    <div key={i} className="relative flex h-[66px] w-[74px] items-center justify-center">
      {active && <div className="absolute top-[30px] left-[5px] size-[6px] rounded-full bg-[#e95420]" />}
      {icon}
    </div>
  );
  return (
    <div className="flex w-[74px] shrink-0 flex-col items-center bg-[#1a0e14] pt-[13px]">
      {dockTop.map((d, i) => cell(d, i, i === 0))}
      <div className="my-[8px] h-px w-12 bg-[#6b6468]" />
      {dockBottom.map((d, i) => cell(d, i, i === 0))}
      <div className="mt-auto mb-[24px] grid grid-cols-3 gap-x-[6px] gap-y-[6.5px]">
        {Array.from({ length: 9 }, (_, i) => <div key={i} className="size-[6px] rounded-[2px] bg-[#f2f2f2]" />)}
      </div>
    </div>
  );
}

/* ---------- Firefox ---------- */

function FirefoxChrome() {
  const circle = "flex size-[22px] items-center justify-center rounded-full bg-[#d9d9d9]";
  return (
    <div className={`flex flex-col text-[14.5px] leading-none text-[#3a3a3a] ${ubuntu}`}>
      <div className="flex h-[43px] items-center bg-[#eaeaea]">
        <FirefoxIcon className="ml-[12px] size-4" />
        <div className="ml-[14px] h-[43px] w-px bg-[#bcbcbc]" />
        <div className="ml-[4px] flex h-[36px] w-[221px] items-center rounded-[4px] bg-[#fcfcfc] shadow-[0_0_4px_#0006]">
          <AirflowLogo className="ml-[8px] size-4" />
          <Fit w={168} className="ml-[7px] [mask-image:linear-gradient(to_right,#000_88%,#0003)]">Google_X_mention_score</Fit>
          <X className="ml-px size-[13px]" strokeWidth={1.5} />
        </div>
        <svg viewBox="0 0 16 16" className="ml-[12px] size-4" fill="none" strokeWidth="3"><path d="M11.500 2.500A6.300 6.300 0 0 0 3 12" stroke="#43c9ed" /><path d="M4.500 13.500A6.300 6.300 0 0 0 13 4" stroke="#0194e2" /><path d="M0 13l5-3v5zM16 3l-5-2v5z" fill="#0194e2" /></svg>
        <Fit w={50} className="ml-[6px]">MLflow</Fit>
        <X className="ml-[119px] size-[13px]" strokeWidth={1.5} />
        <Plus className="ml-[23px] size-[18px]" strokeWidth={1.7} />
        <div className="flex-1" />
        <ChevronDown className="mr-[54px] size-[20px]" strokeWidth={1.7} />
        <div className={circle}><div className="mt-[5px] h-px w-2 bg-[#333]" /></div>
        <div className={`ml-[12px] ${circle}`}><svg viewBox="0 0 9 9" className="size-[9px]"><path d="M.8 2.500h5.500V8H.8z" fill="none" stroke="#333" strokeWidth="1.300" /><path d="M2.500.6h6v6" fill="none" stroke="#888" /></svg></div>
        <div className={`mr-[7px] ml-[12px] ${circle}`}><X className="size-[13px]" strokeWidth={2.6} /></div>
      </div>
      <div className="h-px bg-[#a0a0a0]" />
      <div className="flex h-10 items-center bg-[#fbfbfb]">
        <ArrowLeft className="ml-[14px] size-[20px]" strokeWidth={1.7} />
        <ArrowRight className="ml-[16px] size-[20px] text-[#b4b4b4]" strokeWidth={1.7} />
        <RotateCw className="ml-[18px] size-[17px]" strokeWidth={2} />
        <div className="ml-[127px] flex h-[32px] w-[2903px] items-center rounded-[4px] border border-[#bdbdbd] bg-white">
          <Shield className="ml-[6px] size-[18px] text-black" strokeWidth={1.7} />
          <File className="ml-[11px] size-[17px] text-black" strokeWidth={2} />
          <Fit w={63.5} className="ml-[8px] text-[15px] text-black">localhost</Fit>
          <Fit w={295} className="text-[15px] text-[#777]">:8080/dags/Google_X_mention_score/grid</Fit>
          <div className="flex-1" />
          <svg viewBox="0 0 12 14" className="h-[14px] w-3" fill="none" stroke="#222" strokeWidth="1.300"><rect x=".7" y=".7" width="10.600" height="12.600" rx="2" /><path d="M3 4h6M3 6.500h5M3 9h4" /></svg>
          <Star className="mr-[5px] ml-[12px] size-[19px] text-[#222]" strokeWidth={1.8} />
        </div>
        <div className="flex-1" />
        <svg viewBox="0 0 14 13" className="h-[13px] w-[14px]" fill="none" stroke="#333" strokeWidth="1.400"><path d="M.8 1h12.400v4.500a6.200 6.200 0 0 1-12.400 0zM4 4.500l3 3 3-3" /></svg>
        <Puzzle className="ml-[21px] size-[18px]" strokeWidth={1.8} />
        <Menu className="mr-[16px] ml-[19px] size-[18px]" strokeWidth={1.6} />
      </div>
      <div className="h-px bg-[#c4c4c4]" />
    </div>
  );
}

/* ---------- Airflow page ---------- */

const NavCaret = ({ className = "ml-[3px]" }: IconProps) => (
  <svg viewBox="0 0 8 4" className={`mt-[2px] h-1 w-[7px] shrink-0 ${className}`}><path d="M0 0h8L4 4z" fill="#e4d2e4" /></svg>
);

function AirflowNav() {
  return (
    <div className="relative z-10 flex h-[60px] shrink-0 items-center bg-white pb-[1px] text-[14px] leading-none font-bold text-[#51504f] shadow-[0_3px_14px_#0000002e]">
      <AirflowLogo className="ml-[49px] size-9" />
      <Fit w={55} className="ml-[2px] font-['Open_Sans','Noto_Sans',sans-serif] text-[17px] font-normal">Airflow</Fit>
      <Fit w={37} className="ml-[41px]">DAGs</Fit>
      <Fit w={102} className="ml-[30px]">Cluster Activity</Fit>
      <Fit w={58} className="ml-[30px]">Datasets</Fit>
      <Fit w={55} className="ml-[30px]">Security</Fit><NavCaret />
      <Fit w={50} className="ml-[31px]">Browse</Fit><NavCaret />
      <Fit w={42} className="ml-[31px]">Admin</Fit><NavCaret />
      <Fit w={34} className="ml-[31px]">Docs</Fit><NavCaret />
      <div className="flex-1" />
      <Fit w={67.5}>15:46 UTC</Fit><NavCaret className="ml-[6px]" />
      <div className="mt-[2px] ml-[30px] flex size-[30px] items-center justify-center rounded-full bg-[#bfddfd] pb-[2px] text-[#017cee]"><Fit w={18}>YS</Fit></div>
      <NavCaret className="mr-[50px] ml-[6px]" />
    </div>
  );
}

const Chevron = ({ className = "" }: IconProps) => (
  <svg viewBox="0 0 12 8" className={`mt-[3px] shrink-0 ${className}`} fill="none" stroke="#444" strokeWidth="2.200"><path d="M1 1.200l5 5 5-5" /></svg>
);

function FilterBar() {
  const box = "flex h-[34px] shrink-0 items-center rounded-[4px] bg-white pb-[3px] border border-[#e2e8f0]";
  return (
    <div className="flex h-[60px] shrink-0 items-center bg-[#eaeaea] text-[14px] leading-none text-[#51504f]">
      <div className={`ml-[19px] w-[237px] pl-[14px] ${box}`}>
        <Fit w={86}>01 / 18 / 2024 ,</Fit>
        <Fit w={64} className="ml-[7px]">03 : 41 : 37</Fit>
        <Fit w={20} className="ml-[10px]">PM</Fit>
        <svg viewBox="0 0 14 14" className="mt-[3px] ml-[6px] size-[14px]"><path d="M1 3h12v10H1z" fill="none" stroke="#666" strokeWidth="1.400" /><path d="M1 2h12v3H1zM3 0h1.500v2H3zM9.500 0H11v2H9.500z" fill="#666" /></svg>
      </div>
      <div className={`ml-[14px] w-[68px] pl-[12px] ${box}`}><Fit w={15}>25</Fit><Chevron className="ml-[24px] h-[6px] w-[8px]" /></div>
      <div className={`ml-[14px] w-[146px] pl-[12px] ${box}`}><Fit w={83}>All Run Types</Fit><Chevron className="ml-[26px] h-2 w-3" /></div>
      <div className={`ml-[14px] w-[147px] pl-[12px] ${box}`}><Fit w={85}>All Run States</Fit><Chevron className="ml-[24px] h-2 w-3" /></div>
      <div className="ml-[12px] flex h-[36px] w-[116px] items-center justify-center rounded-[4px] border border-[#00a2c7] bg-white pb-[3px] font-bold text-[#00a2c7]"><Fit w={78} className="text-[13.500px]">Clear Filters</Fit></div>
      <div className="flex-1" />
      <svg viewBox="0 0 14 18" className="h-[18px] w-[14px]" fill="none" stroke="#3182ce" strokeWidth="1.600"><path d="M7.500 1.200A8 8 0 0 1 .5 16.700" /></svg>
      <Fit w={65} className="mb-[3px] ml-[3px] text-[12px]">Auto-refresh</Fit>
      <div className="mr-[18px] ml-[9px] flex h-[21px] w-[37px] items-center justify-end rounded-full bg-[#3182ce] pr-px"><div className="size-[18px] rounded-full bg-white" /></div>
    </div>
  );
}

const badges: [string, number, string][] = [
  ["deferred", 50, "border-[#9370db]"], ["failed", 36, "border-[#ff0000]"], ["queued", 47, "border-[#808080]"],
  ["removed", 52, "border-[#d3d3d3]"], ["restarting", 56, "border-[#ee82ee]"], ["running", 47, "border-[#00ff00]"],
  ["scheduled", 60, "border-[#d2b48c]"], ["skipped", 48, "border-[#ff69b4]"], ["success", 50, "border-[#008000]"],
  ["up_for_reschedule", 101, "border-[#40e0d0]"], ["up_for_retry", 69, "border-[#ffd700]"], ["upstream_failed", 88, "border-[#ffa500]"],
];

function StatusRow() {
  const kbd = "flex h-[15px] items-center justify-center rounded-[4px] border border-b-[2.4px] border-[#e2e8f0] bg-[#edf2f7] font-['Liberation_Mono','DejaVu_Sans_Mono',monospace] font-bold";
  return (
    <div className="flex h-[44px] shrink-0 items-center pr-[17px] pl-[12px] text-[10.5px] leading-none text-[#51504f]">
      <Fit w={27}>Press</Fit>
      <div className={`ml-[4px] w-[35px] ${kbd}`}><Fit w={26} className="text-[9.5px]">shift</Fit></div>
      <Fit w={6} className="ml-[4px]">+</Fit>
      <div className={`ml-[3px] w-[14px] ${kbd}`}><span className="text-[9.5px]">/</span></div>
      <Fit w={62} className="ml-[3px]">for Shortcuts</Fit>
      <div className="flex flex-1 justify-end gap-[6px]">
        {badges.map(([t, w, c]) => (
          <div key={t} className={`flex h-[20px] items-center justify-center rounded-[4px] border-[2.4px] bg-white pb-px ${c}`} style={{ width: w }}>
            <Fit w={w - 9.5}>{t}</Fit>
          </div>
        ))}
        <div className="ml-[5px] flex h-[20px] items-center pb-px"><Fit w={47}>no_status</Fit></div>
      </div>
    </div>
  );
}

type Cell = "ok" | "skip" | "none";
const tasks: [string, number, Cell, Cell][] = [
  ["get_data", 54, "ok", "ok"], ["process_data", 84, "ok", "skip"], ["train_test_split", 89.5, "ok", "none"],
  ["train_model_naive", 113.5, "ok", "ok"], ["test_model_naive", 109, "ok", "ok"], ["train_model_exp", 102.5, "ok", "ok"],
  ["test_model_exp", 98, "ok", "ok"], ["train_model_theta", 111, "ok", "none"], ["test_model_theta", 106.5, "ok", "none"],
];
const cellClass: Record<Cell, string> = {
  ok: "bg-[#008000]", skip: "bg-[#808080]", none: "bg-white border border-[#e2e8f0]",
};

function GridPanel() {
  return (
    <div className="relative flex w-[300px] shrink-0 flex-col text-[#51504f]">
      <div className="flex h-[44px] justify-end pt-[17px] pr-[2px]"><MdDoubleArrow className="size-[20px] rotate-180 text-[#a0aec0]" /></div>
      <div className="flex h-[146px] text-[11px] leading-none text-[#a0aec0]">
        <div className="ml-[197px] flex w-[42px] flex-col items-end pt-[5px]">
          <div className="flex h-6 items-center"><Fit w={39}>Duration</Fit></div>
          <div className="flex h-6 items-center"><Fit w={41}>00:02:55</Fit></div>
          <div className="mt-[26px] flex h-6 items-center"><Fit w={41}>00:01:27</Fit></div>
          <div className="mt-[22px] flex h-6 items-center"><Fit w={41}>00:00:00</Fit></div>
        </div>
        <svg viewBox="0 0 32 146" className="ml-[3px] h-[146px] w-8">
          <path d="M0 45.500h32M0 95.500h32M0 141.500h32" stroke="#e7ebf1" />
          <rect x="3" y="44" width="10" height="100" rx="1.500" fill="#008000" />
          <rect x="19" y="82" width="10" height="62" rx="1.500" fill="#00ff00" />
          <path d="M22.500 136v4l3.500-2z" fill="#fff" />
        </svg>
      </div>
      <div className="h-[3px] w-[274px] bg-[#e2e8f0]" />
      <div className="mt-px flex w-[281px] flex-col text-[14px] leading-none">
        {tasks.map(([name, w, a, b], i) => (
          <div key={name} className={`flex h-[19px] ${i === 2 ? "bg-[#ebf8ff]" : ""}`}>
            <div className="flex w-[242px] items-center pb-[2px] pl-[12px]"><Fit w={w}>{name}</Fit></div>
            <div className="flex w-8 items-center gap-[4px] border-b border-[#e2e8f0] pl-[3px]">
              <div className={`mr-[2px] size-[10px] rounded-[2px] ${cellClass[a]}`} />
              <div className={`size-[10px] rounded-[2px] ${cellClass[b]}`} />
            </div>
          </div>
        ))}
      </div>
      <div className="absolute top-[268px] left-[57px] flex h-[44px] w-[127px] items-center justify-center rounded-[4px] bg-black/80">
        <Fit w={100} className={`text-[15px] leading-none text-white ${ubuntu}`}>train_test_split</Fit>
      </div>
    </div>
  );
}

type Row = { label: string; lw: number; value?: string; vw?: number; h: string; head?: boolean; dot?: string };
const rows: Row[] = [
  { label: "DAG Runs Summary", lw: 117, h: "h-[40px]", head: true },
  { label: "Total Runs Displayed", lw: 130.5, value: "2", vw: 8, h: "h-[39px]" },
  { label: "Total success", lw: 84, value: "1", vw: 8, h: "h-[41px]", dot: "bg-[#008000]" },
  { label: "Total running", lw: 79.5, value: "1", vw: 8, h: "h-[39px]", dot: "bg-[#00ff00]" },
  { label: "First Run Start", lw: 90, value: "2024-01-18, 15:41:32 UTC", vw: 165, h: "h-[41px]" },
  { label: "Last Run Start", lw: 89.5, value: "2024-01-18, 15:44:29 UTC", vw: 165, h: "h-[39px]" },
  { label: "Max Run Duration", lw: 112.5, value: "00:02:55", vw: 54, h: "h-[41px]" },
  { label: "Mean Run Duration", lw: 120.5, value: "00:02:22", vw: 54, h: "h-[39px]" },
  { label: "Min Run Duration", lw: 108.5, value: "00:01:49", vw: 54, h: "h-[41px]" },
  { label: "DAG Summary", lw: 84, h: "h-[41px]", head: true },
  { label: "Total Tasks", lw: 69, value: "9", vw: 8, h: "h-[40px]" },
  { label: "BashOperators", lw: 93.5, value: "9", vw: 8, h: "h-[39px]" },
  { label: "DAG Details", lw: 68.5, h: "h-[41px]", head: true },
  { label: "Dag id", lw: 40, value: "Google_X_mention_score", vw: 161, h: "h-[39px]" },
  { label: "Description", lw: 69.5, value: "null", vw: 22, h: "h-[41px]" },
  { label: "Fileloc", lw: 40.5, value: "/home/angry/mlops_4/airflow/dags/google_mention_score.py", vw: 377, h: "h-[39px]" },
  { label: "Has import errors", lw: 108, value: "false", vw: 29, h: "h-[41px]" },
  { label: "Has task concurrency limits", lw: 170, value: "false", vw: 29, h: "h-[39px]" },
  { label: "Is active", lw: 51, value: "true", vw: 24, h: "h-[41px]" },
  { label: "Is paused", lw: 60.5, value: "false", vw: 29, h: "h-[39px]" },
  { label: "Is subdag", lw: 60.5, value: "false", vw: 29, h: "h-[41px]" },
];

function DetailsPanel() {
  return (
    <div className="flex w-[2992px] flex-col text-[#51504f]">
      <div className="flex h-[51px]">
        <MdDoubleArrow className="mt-[17px] ml-[2px] size-[20px] text-[#a0aec0]" />
        <div className="ml-[5px] flex flex-col pt-[13px] font-bold">
          <Fit w={25} className="text-[12px] leading-[14px] text-[#cbd5e0]">DAG</Fit>
          <Fit w={185} className="text-[15.5px] leading-[15px]">Google_X_mention_score</Fit>
        </div>
      </div>
      <div className="ml-[9px] h-px bg-[#ececec]" />
      <div className="ml-[9px] flex h-[43px] items-center text-[13.5px] leading-none font-bold">
        <MdDetails className="mt-[5px] ml-[11px] size-[18px] text-[#2b6cb0]" />
        <Fit w={44} className="ml-[2px] text-[#2b6cb0]">Details</Fit>
        <MdAccountTree className="mt-[5px] ml-[24px] size-[16px]" />
        <Fit w={40} className="ml-[3px]">Graph</Fit>
        <svg viewBox="0 0 12 12" className="mt-[4px] ml-[26px] size-3" fill="none" stroke="#51504f" strokeWidth="1.300"><rect x=".7" y=".7" width="10.600" height="10.600" rx="1" /><path d="M3 3.500h4M4.500 6H9M3 8.500h4" /></svg>
        <Fit w={35} className="ml-[5px]">Gantt</Fit>
        <MdCode className="mt-[5px] ml-[24px] size-[16px]" />
        <Fit w={34} className="ml-[3px]">Code</Fit>
      </div>
      <div className="ml-[9px] flex h-[2px] bg-[#e2e8f0]"><div className="h-[2px] w-[87px] bg-[#2b6cb0]" /></div>
      <div className="mt-[12px] ml-[21px] flex w-[2959px] flex-col text-[14px] leading-none">
        {rows.map((r, i) => (
          <div key={r.label} className={`flex items-center pb-[3px] pl-[18px] ${r.h} ${i % 2 === 0 ? "bg-[#edf2f7]" : "bg-white"} ${r.head ? "border-b-[2.4px] border-[#cbd5e0] text-[12.5px] font-bold" : ""}`}>
            <div className="flex w-[1037px] items-center">
              {r.dot && <div className={`mt-[3px] mr-[5px] size-[10px] rounded-[2px] ${r.dot}`} />}
              <Fit w={r.lw} className={r.dot ? "text-[#0000ff]" : ""}>{r.label}</Fit>
            </div>
            {r.value && <Fit w={r.vw ?? 0}>{r.value}</Fit>}
          </div>
        ))}
      </div>
    </div>
  );
}

function AirflowPage() {
  return (
    <div className="flex h-[1232px] flex-col bg-white font-['Liberation_Sans',Arial,sans-serif]">
      <AirflowNav />
      <div className="flex h-[1112px] flex-col px-[34px]">
        <div className="flex h-[22px] shrink-0 items-start justify-between">
          <div className="h-[10px] w-20 rounded-b-[4px] bg-[#3d658f]" />
          <div className="flex h-[4px] w-[66px] rounded-b-[4px] border border-t-0 border-[#bbb]"><div className="w-1/2 border-r border-[#bbb]" /></div>
        </div>
        <FilterBar />
        <StatusRow />
        <div className="h-[2px] shrink-0 bg-[#ebf0f5]" />
        <div className="flex flex-1">
          <GridPanel />
          <div className="mt-[15px] h-[959px] w-[6px] shrink-0 bg-[#e2e8f0]" />
          <DetailsPanel />
        </div>
      </div>
      <div className="flex h-[60px] flex-col bg-[#f4f4f4] pt-[9px] pl-[49px] text-[14px] leading-[20px] text-[#999]">
        <div className="flex"><Fit w={50.5}>Version:</Fit><Fit w={38.5} className="ml-[4px] text-[#2f6592]">v2.8.0</Fit></div>
        <div className="flex"><Fit w={72}>Git Version:</Fit><Fit w={373} className="ml-[4px] font-bold">.release:db2b75c233e3e3c59ec9d0563b93ddbe733ad0bf</Fit></div>
      </div>
    </div>
  );
}

function RightMonitor() {
  return (
    <div className="flex h-[1440px] w-[3440px] shrink-0 flex-col">
      <VmwareChrome />
      <GnomeBar />
      <div className="flex h-[1317px]">
        <Dock />
        <div className="flex w-[3366px] flex-col">
          <FirefoxChrome />
          <AirflowPage />
        </div>
      </div>
      <div className="flex h-10 items-center bg-linear-to-r from-[#cfe6ef] via-[#d1e1ed] to-[#d3dbea]">
        <div className="ml-[16px]"><WinLogo /></div>
        <Magnifier className="ml-[29px] size-[22px]" sw={1.6} />
        <div className="ml-[29px]"><TaskViewIcon /></div>
        <div className="ml-[18px]"><TaskApps /></div>
        <div className="flex-1" />
        <div className={`mr-[6px] flex flex-col items-center text-[11.5px] leading-[18px] text-[#111] ${winFont}`}>
          <Fit w={27}>18:46</Fit>
          <Fit w={54}>18.01.2024</Fit>
        </div>
      </div>
    </div>
  );
}

export default function App() {
  return (
    <div className="h-[1227px] w-[4096px] overflow-hidden bg-black">
      <div className="flex h-[1440px] w-[4806px] [zoom:0.85227]">
        <LeftMonitor />
        <RightMonitor />
      </div>
    </div>
  );
}
